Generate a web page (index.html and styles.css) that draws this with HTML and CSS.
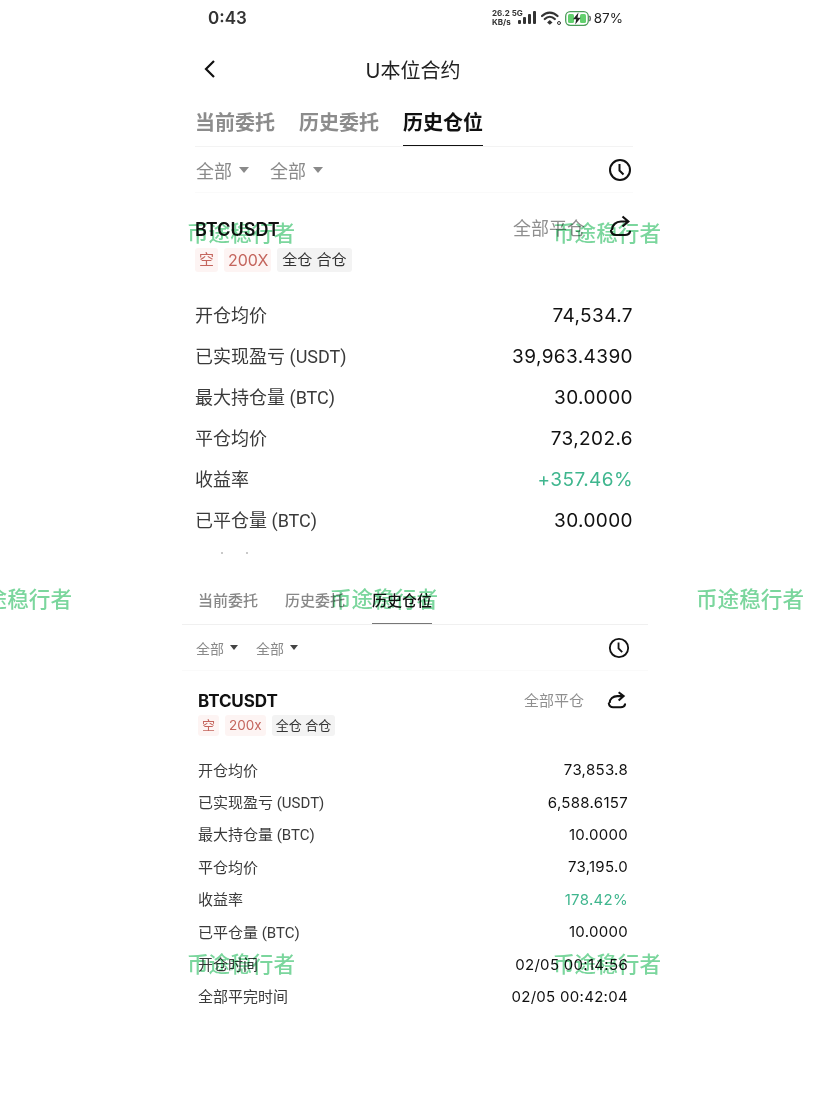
FILE: index.html
```html
<!DOCTYPE html>
<html lang="zh-CN">
<head>
  <meta charset="UTF-8">
  <meta name="viewport" content="width=device-width, initial-scale=1.0">
  <title>U本位合约</title>
  <link rel="stylesheet" href="styles.css">
</head>
<body>
  <div class="page">
    <div class="shot-top">
      <div class="status">
        <span class="time">0:43</span>
        <div class="status-right">
          <span class="speed">26.2 5G<br>KB/s</span>
          <svg class="signal" width="18" height="14" viewBox="0 0 18 14"><rect x="0" y="9" width="3" height="4" rx="1"/><rect x="5" y="6" width="3" height="7" rx="1"/><rect x="10" y="3" width="3" height="10" rx="1"/><rect x="15" y="0" width="3" height="13" rx="1"/></svg>
          <svg class="wifi" width="20" height="15" viewBox="0 0 20 15"><path d="M1 5c4.500-4.600 11-4.600 15.500 0M3.800 8c3-3 7-3 10 0" fill="none" stroke="#333" stroke-width="2.200" stroke-linecap="round"/><path d="M8.800 9l2.700 2.400-2.700 2.400-2.700-2.400z" fill="#333"/><circle cx="18" cy="12" r="1.500" fill="none" stroke="#333"/></svg>
          <svg class="battery" width="26" height="15" viewBox="0 0 26 15"><rect x="0.700" y="0.700" width="22.600" height="13.600" rx="4.500" fill="#fff" stroke="#4a9c58" stroke-width="1.300"/><rect x="3" y="3" width="6" height="9" rx="1.500" fill="#62d06e"/><rect x="15" y="3" width="6" height="9" rx="1.500" fill="#62d06e"/><path d="M24.500 5c1 .8 1 4.200 0 5" fill="none" stroke="#3a3a3a" stroke-width="1.200"/><path d="M13.500 1.500L8 8.300h3.200l-1 5.200 5.500-6.800h-3.200z" fill="#222"/></svg>
          <span class="percent">87%</span>
        </div>
      </div>

      <div class="nav">
        <svg class="back" width="14" height="20" viewBox="0 0 14 20"><path d="M11 2L3 10l8 8" fill="none" stroke="#111" stroke-width="2.200"/></svg>
        <h1 class="nav-title">U本位合约</h1>
      </div>

      <div class="tabs">
        <span class="tab">当前委托</span>
        <span class="tab">历史委托</span>
        <span class="tab active">历史仓位</span>
      </div>

      <div class="filters">
        <span class="filter">全部<i class="caret"></i></span>
        <span class="filter">全部<i class="caret"></i></span>
        <svg class="clock" width="24" height="24" viewBox="0 0 24 24"><circle cx="12" cy="12" r="10" fill="none" stroke="#111" stroke-width="2"/><path d="M11.500 6v6.500l4 4" fill="none" stroke="#111" stroke-width="2"/></svg>
      </div>

      <div class="head">
        <span class="symbol">BTCUSDT</span>
        <span class="close-all">全部平仓</span>
        <svg class="share" width="24" height="22" viewBox="0 0 24 22"><path d="M4 15c0-5 4-8.500 9-8.500h7M14.500 1.500l5.800 5-5.800 5" fill="none" stroke="#111" stroke-width="2.200"/><path d="M3 15.500c.5 3 2.500 4.500 5 4.500h9c2.500 0 4.500-1 5-3.500" fill="none" stroke="#111" stroke-width="2.200" stroke-linecap="round"/></svg>
      </div>

      <div class="tags">
        <span class="tag red">空</span>
        <span class="tag red num">200X</span>
        <span class="tag gray">全仓 合仓</span>
      </div>

      <div class="rows">
        <div class="row"><span>开仓均价</span><b>74,534.7</b></div>
        <div class="row"><span>已实现盈亏 (USDT)</span><b>39,963.4390</b></div>
        <div class="row"><span>最大持仓量 (BTC)</span><b>30.0000</b></div>
        <div class="row"><span>平仓均价</span><b>73,202.6</b></div>
        <div class="row"><span>收益率</span><b class="green">+357.46%</b></div>
        <div class="row"><span>已平仓量 (BTC)</span><b>30.0000</b></div>
      </div>

      <div class="specks"><i></i><i></i></div>
    </div>

    <div class="shot-bottom">
      <div class="tabs">
        <span class="tab">当前委托</span>
        <span class="tab">历史委托</span>
        <span class="tab active">历史仓位</span>
      </div>

      <div class="filters">
        <span class="filter">全部<i class="caret"></i></span>
        <span class="filter">全部<i class="caret"></i></span>
        <svg class="clock" width="22" height="22" viewBox="0 0 24 24"><circle cx="12" cy="12" r="10" fill="none" stroke="#111" stroke-width="2"/><path d="M11.500 6v6.500l4 4" fill="none" stroke="#111" stroke-width="2"/></svg>
      </div>

      <div class="head">
        <span class="symbol">BTCUSDT</span>
        <span class="close-all">全部平仓</span>
        <svg class="share" width="21" height="18" viewBox="0 0 24 21"><path d="M4 14c0-5 4-8 9-8h7M14.500 1.500l5.800 4.500-5.800 5" fill="none" stroke="#111" stroke-width="2.400"/><path d="M3 14.500c.5 3 2.500 4.500 5 4.500h9c2.500 0 4.500-1 5-3.500" fill="none" stroke="#111" stroke-width="2.400" stroke-linecap="round"/></svg>
      </div>

      <div class="tags">
        <span class="tag red">空</span>
        <span class="tag red num">200x</span>
        <span class="tag gray">全仓 合仓</span>
      </div>

      <div class="rows">
        <div class="row"><span>开仓均价</span><b>73,853.8</b></div>
        <div class="row"><span>已实现盈亏 (USDT)</span><b>6,588.6157</b></div>
        <div class="row"><span>最大持仓量 (BTC)</span><b>10.0000</b></div>
        <div class="row"><span>平仓均价</span><b>73,195.0</b></div>
        <div class="row"><span>收益率</span><b class="green">178.42%</b></div>
        <div class="row"><span>已平仓量 (BTC)</span><b>10.0000</b></div>
        <div class="row"><span>开仓时间</span><b>02/05 00:14:56</b></div>
        <div class="row"><span>全部平完时间</span><b>02/05 00:42:04</b></div>
      </div>
    </div>

    <span class="mark m1">币途稳行者</span>
    <span class="mark m2">币途稳行者</span>
    <span class="mark m3">币途稳行者</span>
    <span class="mark m4">币途稳行者</span>
    <span class="mark m5">币途稳行者</span>
    <span class="mark m6">币途稳行者</span>
    <span class="mark m7">币途稳行者</span>
  </div>
</body>
</html>
```

FILE: styles.css
```css
* { box-sizing: border-box; }
html, body { margin: 0; padding: 0; background: #fff; }
body { font-family: "Inter", "Noto Sans CJK SC", sans-serif; color: #222; }

.page { position: relative; width: 828px; height: 1104px; overflow: hidden; }

/* top screenshot */
.shot-top { height: 580px; padding: 0 195px; }

.status { height: 36px; display: flex; align-items: center; justify-content: space-between; padding: 0 10px 0 13px; }
.time { font-size: 17px; font-weight: 600; color: #333; }
.status-right { display: flex; align-items: center; gap: 5px; }
.speed { font-size: 8px; line-height: 9px; font-weight: 700; color: #333; white-space: nowrap; margin-right: -10px; }
.signal { fill: #333; }
.wifi { margin-right: -1px; }
.percent { font-size: 13.500px; font-weight: 400; color: #222; margin-left: -2px; }

.nav { height: 68px; position: relative; display: flex; align-items: center; justify-content: center; }
.back { position: absolute; left: 8px; top: 23px; }
.nav-title { margin: 0 2px 2px 0; font-size: 20px; font-weight: 400; color: #222; }

.tabs { display: flex; gap: 24px; height: 43px; border-bottom: 1px solid #f3f3f3; }
.tab { font-size: 20px; line-height: 38px; font-weight: 700; color: #8c8c8c; height: 42px; }
.tab.active { color: #111; border-bottom: 1.500px solid #111; }

.filters { height: 46px; display: flex; align-items: center; gap: 21px; padding-left: 1px; border-bottom: 1px solid #fafafa; }
.filter { font-size: 18px; color: #8a8a8a; display: flex; align-items: center; }
.caret { width: 0; height: 0; margin-left: 7px; border: 5px solid transparent; border-top: 6px solid #8a8a8a; border-bottom: 0; }
.clock { margin-left: auto; margin-right: 1px; }

.head { display: flex; align-items: center; margin-top: 18px; height: 36px; }
.symbol { font-size: 18px; font-weight: 600; color: #111; }
.close-all { margin-left: auto; font-size: 18px; color: #8f8f8f; margin-right: 23px; padding-bottom: 4px; }
.share { margin: 0 1px 6px 0; }

.tags { display: flex; gap: 6px; height: 24px; margin-top: 1px; }
.tag { font-size: 15px; line-height: 24px; padding: 0 4px; border-radius: 3px; }
.tag.num { font-size: 16px; padding: 0 3px 0 4px; }
.red { background: #fdf4f3; color: #c4655d; }
.gray { background: #f3f3f3; color: #333; padding: 0 5px; }

.rows { margin-top: 23px; }
.row { display: flex; justify-content: space-between; align-items: center; height: 41px; font-size: 18px; color: #3a3a3a; }
.row span { font-family: "Roboto", "Noto Sans CJK SC", sans-serif; padding-bottom: 4px; }
.row b { font-weight: 400; font-size: 19px; color: #111; letter-spacing: .4px; }
.row b.green { color: #3fb68e; }

.specks { display: flex; gap: 23px; margin: 11px 0 0 26px; }
.specks i { width: 2px; height: 2px; background: #c9c9c9; }

/* bottom screenshot, slightly smaller */
.shot-bottom { padding: 0 180px 0 182px; }
.shot-bottom .tabs { gap: 27px; height: 45px; padding-left: 16px; border-bottom: 1px solid #f0f0f0; align-items: flex-end; }
.shot-bottom .tab { font-size: 15px; line-height: 42px; height: 44px; color: #888; font-weight: 500; }
.shot-bottom .tab.active { color: #111; border-bottom: 1.500px solid #777; }
.shot-bottom .filters { height: 46px; gap: 18px; padding: 0 18px 0 14px; }
.shot-bottom .filter { font-size: 14px; }
.shot-bottom .caret { margin-left: 6px; border-width: 4px; border-top: 5px solid #444; border-bottom: 0; }
.shot-bottom .clock { margin: 0 0 0 auto; }
.shot-bottom .head { margin-top: 13px; height: 34px; padding: 0 21px 0 16px; }
.shot-bottom .symbol { font-size: 17px; font-weight: 700; letter-spacing: -.1px; }
.shot-bottom .close-all { font-size: 15px; margin-right: 22px; padding-bottom: 3px; }
.shot-bottom .share { margin: 0 0 3px 0; }
.shot-bottom .tags { height: 21px; gap: 6px; margin-top: -3px; padding-left: 16px; }
.shot-bottom .tag { font-size: 13px; line-height: 21px; padding: 0 4px; }
.shot-bottom .tag.num { font-size: 13.500px; padding: 0 4px; }
.shot-bottom .tag.gray { padding: 0 4px; }
.shot-bottom .rows { margin-top: 17.500px; padding: 0 20px 0 16px; }
.shot-bottom .row { height: 32.400px; font-size: 15px; }
.shot-bottom .row span { padding-bottom: 1px; }
.shot-bottom .row b { font-size: 15px; letter-spacing: .3px; }

/* watermarks over the picture */
.mark { position: absolute; font-size: 21.600px; line-height: 24px; color: #7bd69d; white-space: nowrap; font-family: "Noto Sans CJK SC", sans-serif; font-weight: 500; mix-blend-mode: multiply; }
.m1 { left: 187px; top: 220px; }
.m2 { left: 553px; top: 220px; }
.m3 { left: -36px; top: 586px; }
.m4 { left: 330px; top: 586px; }
.m5 { left: 696px; top: 586px; }
.m6 { left: 187px; top: 951px; }
.m7 { left: 553px; top: 951px; }
```
